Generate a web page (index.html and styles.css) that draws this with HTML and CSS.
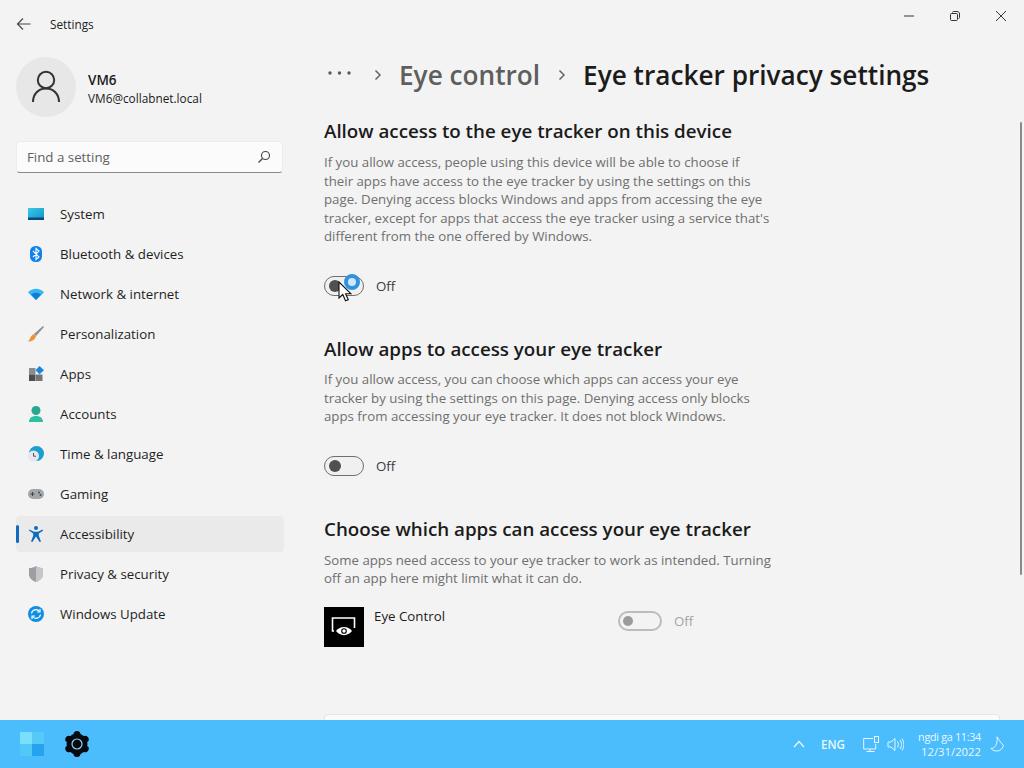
FILE: index.html
```html
<!DOCTYPE html>
<html lang="en">
<head>
<meta charset="utf-8">
<title>Settings</title>
<link rel="stylesheet" href="styles.css">
</head>
<body>
<div class="screen">
  <div class="window">
    <aside class="sidebar">
      <div class="appbar">
        <svg class="back" width="16" height="14" viewBox="0 0 16 14"><path d="M14.5 7H2M7 1.5 1.5 7 7 12.5" fill="none" stroke="#444" stroke-width="1.1"/></svg>
        <span class="apptitle">Settings</span>
      </div>
      <div class="profile">
        <div class="avatar">
          <svg width="30" height="34" viewBox="0 0 30 34"><circle cx="15" cy="10" r="8.2" fill="none" stroke="#333" stroke-width="2"/><path d="M2 32c0-8 5.500-13.500 13-13.500S28 24 28 32" fill="none" stroke="#333" stroke-width="2"/></svg>
        </div>
        <div class="who">
          <div class="who-name">VM6</div>
          <div class="who-mail">VM6@collabnet.local</div>
        </div>
      </div>
      <div class="search">
        <span>Find a setting</span>
        <svg width="14" height="14" viewBox="0 0 14 14"><circle cx="8.500" cy="5.500" r="4" fill="none" stroke="#444" stroke-width="1.1"/><path d="M5.500 8.500 1.500 12.500" stroke="#444" stroke-width="1.2"/></svg>
      </div>
      <nav class="nav">
        <div class="nav-item">
          <svg class="ico" viewBox="0 0 16 12" width="16" height="12"><defs><linearGradient id="sys" x1="0" y1="0" x2="1" y2="1"><stop offset="0" stop-color="#3fc6e6"/><stop offset="1" stop-color="#0d96c9"/></linearGradient></defs><rect width="16" height="12" fill="url(#sys)"/><rect y="9.500" width="16" height="2.500" fill="#0a4a78"/></svg>
          <span>System</span>
        </div>
        <div class="nav-item">
          <svg class="ico" viewBox="0 0 12 16" width="12" height="16"><rect width="12" height="16" rx="5.500" fill="#0f82ee"/><path d="M3 5l6 6-3 2.500V2.500L9 5l-6 6" fill="none" stroke="#fff" stroke-width="1.100"/></svg>
          <span>Bluetooth &amp; devices</span>
        </div>
        <div class="nav-item">
          <svg class="ico" viewBox="0 0 16 12" width="16" height="12"><path d="M0 4.500C4-.5 12-.5 16 4.500L8 12Z" fill="#36b6f2"/><path d="M3 6.500c3-2.500 7-2.500 10 0L8 12Z" fill="#0e7fd8"/></svg>
          <span>Network &amp; internet</span>
        </div>
        <div class="nav-item">
          <svg class="ico" viewBox="0 0 16 16" width="16" height="16"><path d="M15 0 16 1 8 10 6 8Z" fill="#8a8f96"/><path d="M6 8l2 2c-1 4-4 5.500-8 5.500C2 14 2 10 6 8Z" fill="#e8953a"/></svg>
          <span>Personalization</span>
        </div>
        <div class="nav-item">
          <svg class="ico" viewBox="0 0 16 16" width="16" height="16"><rect x="1" y="2" width="6.500" height="6.500" fill="#8c8c8c"/><rect x="1" y="8.500" width="6.500" height="6.500" fill="#4d4d4d"/><rect x="8" y="8.500" width="6.500" height="6.500" fill="#747474"/><path d="M11.500 0 16 4.200 11.500 8.300 7.500 4.200Z" fill="#1a86e0"/></svg>
          <span>Apps</span>
        </div>
        <div class="nav-item">
          <svg class="ico" viewBox="0 0 16 16" width="16" height="16"><circle cx="8" cy="4.500" r="4.500" fill="#27a98f"/><path d="M1 16c0-4 3-6 7-6s7 2 7 6Z" fill="#2bc0a4"/></svg>
          <span>Accounts</span>
        </div>
        <div class="nav-item">
          <svg class="ico" viewBox="0 0 16 16" width="16" height="16"><circle cx="8.500" cy="7.500" r="7.500" fill="#1a9fd0"/><circle cx="5.500" cy="10" r="5.500" fill="#e6e6ee"/><path d="M5.500 7v3.200h2.500" fill="none" stroke="#555" stroke-width="1"/></svg>
          <span>Time &amp; language</span>
        </div>
        <div class="nav-item">
          <svg class="ico" viewBox="0 0 16 10" width="16" height="10"><rect width="16" height="10" rx="5" fill="#a3a7aa"/><path d="M2.500 5h4M4.500 3v4" stroke="#444" stroke-width="1"/><circle cx="11" cy="3.500" r=".9" fill="#444"/><circle cx="12.500" cy="6" r=".9" fill="#444"/></svg>
          <span>Gaming</span>
        </div>
        <div class="nav-item active">
          <svg class="ico" viewBox="0 0 14 16" width="14" height="16"><circle cx="7" cy="2" r="2" fill="#0f6cbd"/><path d="M.5 3.500 5 5.800h4l4.500-2.300.6 1.100L9.800 7.600v2.200L12 15.500l-1.400.5L7 10.500 3.400 16 2 15.500l2.200-5.700V7.600L0 4.600Z" fill="#0f6cbd"/></svg>
          <span>Accessibility</span>
        </div>
        <div class="nav-item">
          <svg class="ico" viewBox="0 0 14 16" width="14" height="16"><path d="M7 0c2 1.500 4.500 2 7 2v6c0 4-3 6.500-7 8-4-1.500-7-4-7-8V2c2.500 0 5-.5 7-2Z" fill="#9b9fa3"/><path d="M7 0c2 1.500 4.500 2 7 2v6c0 4-3 6.500-7 8Z" fill="#c4c6c8"/></svg>
          <span>Privacy &amp; security</span>
        </div>
        <div class="nav-item">
          <svg class="ico" viewBox="0 0 16 16" width="16" height="16"><circle cx="8" cy="8" r="8" fill="#0f8fe3"/><path d="M3.500 7.500a4.500 4.500 0 0 1 8-2M12.500 8.500a4.500 4.500 0 0 1-8 2" fill="none" stroke="#fff" stroke-width="1.200"/><path d="M12 3v3H9M4 13v-3h3" fill="none" stroke="#fff" stroke-width="1.200"/></svg>
          <span>Windows Update</span>
        </div>
      </nav>
    </aside>
    <main class="content">
      <div class="controls">
        <svg width="10" height="10" viewBox="0 0 10 10"><path d="M0 5h10" stroke="#333" stroke-width="1"/></svg>
        <svg width="10" height="10" viewBox="0 0 10 10"><path d="M2.500 1.500c0-.6.400-1 1-1H7c1.500 0 2.500 1 2.500 2.500v3.500c0 .6-.4 1-1 1" fill="none" stroke="#333" stroke-width="1"/><rect x=".5" y="2.500" width="7" height="7" rx="1.200" fill="none" stroke="#333" stroke-width="1"/></svg>
        <svg width="10" height="10" viewBox="0 0 10 10"><path d="M0 0 10 10M10 0 0 10" stroke="#333" stroke-width="1"/></svg>
      </div>
      <header class="crumbs">
        <svg class="dots" width="24" height="4" viewBox="0 0 24 4"><circle cx="2" cy="2" r="1.700" fill="#5a5a5a"/><circle cx="11.500" cy="2" r="1.700" fill="#5a5a5a"/><circle cx="21" cy="2" r="1.700" fill="#5a5a5a"/></svg>
        <svg class="chev first" width="8" height="12" viewBox="0 0 8 12"><path d="M1.500 1.500 6 6 1.500 10.500" fill="none" stroke="#666" stroke-width="1.500"/></svg>
        <span class="crumb-parent">Eye control</span>
        <svg class="chev" width="8" height="12" viewBox="0 0 8 12"><path d="M1.500 1.500 6 6 1.500 10.500" fill="none" stroke="#666" stroke-width="1.500"/></svg>
        <span class="crumb-current">Eye tracker privacy settings</span>
      </header>

      <section class="block first-block">
        <h2>Allow access to the eye tracker on this device</h2>
        <p>If you allow access, people using this device will be able to choose if their apps have access to the eye tracker by using the settings on this page. Denying access blocks Windows and apps from accessing the eye tracker, except for apps that access the eye tracker using a service that's different from the one offered by Windows.</p>
        <div class="toggle-row">
          <span class="toggle"><span class="knob"></span></span>
          <span class="toggle-label">Off</span>
          <span class="touch"></span>
          <svg class="cursor" width="14" height="21" viewBox="0 0 14 21"><path d="M1 1v16l3.800-3.500L7.500 19.800l2.800-1.100-2.700-5.900H13Z" fill="#fff" stroke="#111" stroke-width="1.100"/></svg>
        </div>
      </section>

      <section class="block second-block">
        <h2>Allow apps to access your eye tracker</h2>
        <p>If you allow access, you can choose which apps can access your eye tracker by using the settings on this page. Denying access only blocks apps from accessing your eye tracker. It does not block Windows.</p>
        <div class="toggle-row">
          <span class="toggle"><span class="knob"></span></span>
          <span class="toggle-label">Off</span>
        </div>
      </section>

      <section class="block third-block">
        <h2>Choose which apps can access your eye tracker</h2>
        <p>Some apps need access to your eye tracker to work as intended. Turning off an app here might limit what it can do.</p>
        <div class="app-row">
          <div class="tile">
            <svg width="26" height="22" viewBox="0 0 26 22"><path d="M3 15H1.500V2h22v10" fill="none" stroke="#fff" stroke-width="1.600"/><path d="M5 15c4-5.500 12-5.500 16 0-4 5.500-12 5.500-16 0Z" fill="#fff"/><circle cx="13" cy="15" r="2.300" fill="none" stroke="#000" stroke-width="1.100"/></svg>
          </div>
          <div class="app-name">Eye Control</div>
          <span class="toggle disabled"><span class="knob"></span></span>
          <span class="toggle-label disabled-label">Off</span>
        </div>
      </section>
      <div class="card-edge"></div>
      <div class="scroll-thumb"></div>
    </main>
  </div>
  <footer class="taskbar">
    <div class="task-left">
      <svg width="26" height="26" viewBox="0 0 26 26"><rect x="1" y="1" width="12" height="12" fill="#78e0fb"/><rect x="13" y="1" width="12" height="12" fill="#55caf9"/><rect x="1" y="13" width="12" height="12" fill="#52c8f9"/><rect x="13" y="13" width="12" height="12" fill="#25a3ee"/></svg>
      <svg class="gear" width="26" height="26" viewBox="0 0 26 26"><circle cx="13" cy="13" r="10.500" fill="#060a10"/><path d="M13 3.500v19M4.800 8.300l16.400 9.400M4.800 17.700 21.200 8.300" stroke="#060a10" stroke-width="7" stroke-linecap="round"/><circle cx="13" cy="13" r="5" fill="none" stroke="#8fd3f5" stroke-width="1.200"/></svg>
    </div>
    <div class="tray">
      <svg width="12" height="8" viewBox="0 0 12 8"><path d="M1 7 6 1.500 11 7" fill="none" stroke="#e8f6ff" stroke-width="1.300"/></svg>
      <span class="lang">ENG</span>
      <svg class="net" width="17" height="17" viewBox="0 0 17 17"><path d="M10 2.500H.7v10.500h12V8M3.500 15.500h8M7 13v2.500" fill="none" stroke="#e8f6ff" stroke-width="1"/><rect x="11.500" y=".5" width="4" height="6" fill="none" stroke="#e8f6ff" stroke-width="1"/></svg>
      <svg class="vol" width="17" height="15" viewBox="0 0 17 15"><path d="M1 5h3l4-3.500v12L4 10H1Z" fill="none" stroke="#e8f6ff" stroke-width="1"/><path d="M10.500 4.500c1.200 1.800 1.200 4.200 0 6M13 3c2 2.700 2 6.300 0 9M15 1.500c2.500 3.600 2.500 8.400 0 12" fill="none" stroke="#e8f6ff" stroke-width="1"/></svg>
      <div class="clock"><div class="clock-time">ngdi ga 11:34</div><div>12/31/2022</div></div>
      <svg class="moon" width="14" height="16" viewBox="0 0 14 16"><path d="M7 .8c2 3 2.500 4.500 6.500 8.700-1 3.500-3.500 5.500-6.500 5.500-2.500 0-4.700-.7-6-2.500 3.500 0 7-4 6-11.700Z" fill="none" stroke="#e8f6ff" stroke-width="1"/></svg>
    </div>
  </footer>
</div>
</body>
</html>
```
FILE: styles.css
```css
* { box-sizing: border-box; }
html, body { margin: 0; padding: 0; }
body { font-family: "Open Sans", "Noto Sans", sans-serif; color: #1b1b1b; }
.screen { width: 1024px; height: 768px; display: flex; flex-direction: column; overflow: hidden; }
.window { flex: 1; display: flex; background: #f3f3f3; min-height: 0; }

.sidebar { width: 300px; flex: none; padding-left: 16px; display: flex; flex-direction: column; }
.appbar { height: 48px; display: flex; align-items: center; gap: 18px; }
.back { flex: none; }
.apptitle { font-size: 11.800px; color: #222; }
.profile { margin-top: 9px; display: flex; align-items: center; gap: 12px; height: 60px; }
.avatar { width: 60px; height: 60px; border-radius: 50%; background: #e7e7e7; display: flex; align-items: center; justify-content: center; }
.who { padding-top: 1px; }
.who-name { font-size: 13.500px; font-weight: 600; line-height: 20px; }
.who-mail { font-size: 11.800px; line-height: 16px; }
.search { margin-top: 24px; width: 267px; height: 32px; background: #fbfbfb; border: 1px solid #ececec; border-bottom: 1px solid #8a8a8a; border-radius: 4px; display: flex; align-items: center; justify-content: space-between; padding: 0 11px 0 10px; font-size: 13.300px; color: #5f5f5f; }
.nav { margin-top: 23px; display: flex; flex-direction: column; gap: 4px; }
.nav-item { position: relative; width: 268px; height: 36px; display: flex; align-items: center; font-size: 13.300px; border-radius: 4px; color: #1f1f1f; }
.nav-item span { margin-left: 44px; }
.nav-item .ico { position: absolute; left: 20px; top: 50%; transform: translate(-50%, -50%); }
.active { background: #eaeaea; }
.active::before { content: ""; position: absolute; left: 0; top: 9px; width: 3px; height: 18px; border-radius: 2px; background: #0f6cbd; }

.content { position: relative; flex: 1; min-width: 0; padding-left: 24px; overflow: hidden; }
.controls { position: absolute; top: 11px; right: 18px; display: flex; gap: 36px; }
.crumbs { height: 43px; margin-top: 53px; display: flex; align-items: center; margin-left: 4px; font-size: 26.200px; font-weight: 600; white-space: nowrap; }
.dots { flex: none; margin-bottom: 3px; }
.chev { flex: none; }
.chev.first { margin: 0 17px 0 22px; }
.crumb-parent { color: #5e5e5e; }
.crumb-current { color: #1b1b1b; }
.crumbs .chev:not(.first) { margin: 0 17px 0 18px; }

h2 { margin: 0; font-size: 18.750px; font-weight: 600; line-height: 26px; color: #1b1b1b; white-space: nowrap; }
p { margin: 8px 0 0; width: 447.500px; font-size: 13.250px; line-height: 18.600px; color: #6f6f6f; }
.first-block { margin-top: 22px; }
.first-block p, .third-block p { margin-top: 9px; }
.second-block { margin-top: 40px; }
.third-block { margin-top: 40px; }
.toggle-row { position: relative; display: flex; align-items: center; height: 20px; margin-top: 30px; }
.toggle { display: inline-flex; align-items: center; width: 40px; height: 20px; border: 1px solid #6e6e6e; border-radius: 10px; padding-left: 4px; background: #f0f0f0; flex: none; }
.knob { width: 12px; height: 12px; border-radius: 50%; background: #505050; }
.toggle-label { margin-left: 12px; font-size: 13.300px; color: #3a3a3a; }
.touch { position: absolute; left: 20px; top: -2px; width: 16px; height: 16px; border-radius: 50%; background: #d4e6f7; border: 4px solid #2f94e0; }
.cursor { position: absolute; left: 14px; top: 5px; }
.app-row { position: relative; display: flex; align-items: flex-start; margin-top: 19px; height: 40px; }
.tile { width: 40px; height: 40px; background: #000; display: flex; align-items: center; justify-content: center; flex: none; }
.app-name { margin-left: 10px; width: 244px; font-size: 13.300px; line-height: 18px; color: #1b1b1b; }
.toggle.disabled { margin-top: 4px; width: 44px; border: 2px solid #bcbcbc; padding-left: 3px; background: #f3f3f3; }
.toggle.disabled .knob { background: #9b9b9b; width: 10px; height: 10px; }
.disabled-label { margin-top: 5px; color: #a3a3a3; }
.card-edge { position: absolute; left: 24px; top: 714px; width: 676px; height: 20px; background: #fbfbfb; border: 1px solid #e6e6e6; border-radius: 4px; }
.scroll-thumb { position: absolute; right: 2px; top: 122px; width: 2px; height: 453px; background: #8a8a8a; border-radius: 1px; }

.taskbar { height: 48px; flex: none; background: #4bbdfd; display: flex; align-items: center; justify-content: space-between; padding: 0 20px 0 19px; }
.task-left { display: flex; align-items: center; gap: 19px; }
.tray { display: flex; align-items: center; color: #eaf7ff; }
.lang { font-size: 11.600px; margin-left: 16px; font-weight: 600; }
.net { margin-left: 18px; }
.vol { margin-left: 7px; }
.clock { margin-left: 13px; font-size: 11.300px; line-height: 15.500px; width: 64px; white-space: nowrap; display: flex; flex-direction: column; align-items: flex-end; }
.clock-time { font-size: 10.800px; letter-spacing: -0.3px; }
.moon { margin-left: 9px; }
```
